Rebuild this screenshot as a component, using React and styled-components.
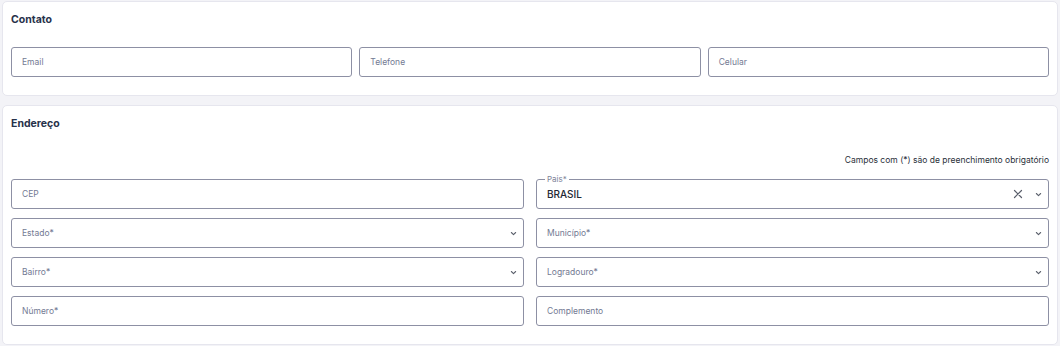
import React from "react"
import styled, { createGlobalStyle } from "styled-components"

const GlobalStyle = createGlobalStyle`
  html, body {
    margin: 0;
    padding: 0;
    background: #f3f3f7;
    font-family: Inter, "Noto Sans", "Liberation Sans", sans-serif;
  }
`

const Page = styled.div`
  display: flex;
  flex-direction: column;
  gap: 9px;
  padding: 1px 2px 0;
`

const Card = styled.section`
  background: #fff;
  border: 1px solid #e6e6ee;
  border-radius: 5px;
  padding: 10px 8px 18px 8px;
`

const Title = styled.h2`
  margin: 0;
  font-size: 10.5px;
  line-height: 16px;
  font-weight: 700;
  color: #27314a;
`

const Row3 = styled.div`
  display: grid;
  grid-template-columns: repeat(3, 1fr);
  gap: 7px;
  margin-top: 19px;
`

const Grid2 = styled.div`
  display: grid;
  grid-template-columns: 1fr 1fr;
  column-gap: 12px;
  row-gap: 9px;
  margin-top: 13px;
`

const Note = styled.p`
  margin: 22px 0 0;
  text-align: right;
  font-size: 8.5px;
  line-height: 12px;
  color: #2a2f3a;
`

const Field = styled.div`
  position: relative;
  height: 30px;
  box-sizing: border-box;
  border: 1px solid #8d90a4;
  border-radius: 3px;
  display: flex;
  align-items: center;
  padding: 0 5px 0 10px;
  gap: 11px;
`

const Placeholder = styled.span`
  flex: 1;
  font-size: 8.5px;
  color: #737a93;
`

const Value = styled.span`
  flex: 1;
  font-size: 10px;
  font-weight: 500;
  color: #222834;
`

const Legend = styled.span`
  position: absolute;
  top: -6px;
  left: 8px;
  padding: 0 2px;
  background: #fff;
  font-size: 8px;
  line-height: 10px;
  color: #7d8398;
`

const Icon = styled.svg`
  flex: none;
  color: #5a5f6b;
`

const Chevron = () => (
  <Icon width="9" height="9" viewBox="0 0 10 10">
    <path d="M2.6 3.9 L5 6.2 L7.4 3.9" fill="none" stroke="currentColor" strokeWidth="1.2" strokeLinecap="round" strokeLinejoin="round" />
  </Icon>
)

const Clear = () => (
  <Icon width="10" height="10" viewBox="0 0 10 10">
    <path d="M1.5 1.5 L8.5 8.5 M8.5 1.5 L1.5 8.5" fill="none" stroke="currentColor" strokeWidth="1.2" strokeLinecap="round" />
  </Icon>
)

const Input = ({ label, select }) => (
  <Field>
    <Placeholder>{label}</Placeholder>
    {select && <Chevron />}
  </Field>
)

const PaisField = () => (
  <Field>
    <Legend>Pais*</Legend>
    <Value>BRASIL</Value>
    <Clear />
    <Chevron />
  </Field>
)

export default function App() {
  return (
    <Page>
      <GlobalStyle />
      <Card>
        <Title>Contato</Title>
        <Row3>
          <Input label="Email" />
          <Input label="Telefone" />
          <Input label="Celular" />
        </Row3>
      </Card>
      <Card>
        <Title>Endereço</Title>
        <Note>Campos com (*) são de preenchimento obrigatório</Note>
        <Grid2>
          <Input label="CEP" />
          <PaisField />
          <Input label="Estado*" select />
          <Input label="Município*" select />
          <Input label="Bairro*" select />
          <Input label="Logradouro*" select />
          <Input label="Número*" />
          <Input label="Complemento" />
        </Grid2>
      </Card>
    </Page>
  )
}
